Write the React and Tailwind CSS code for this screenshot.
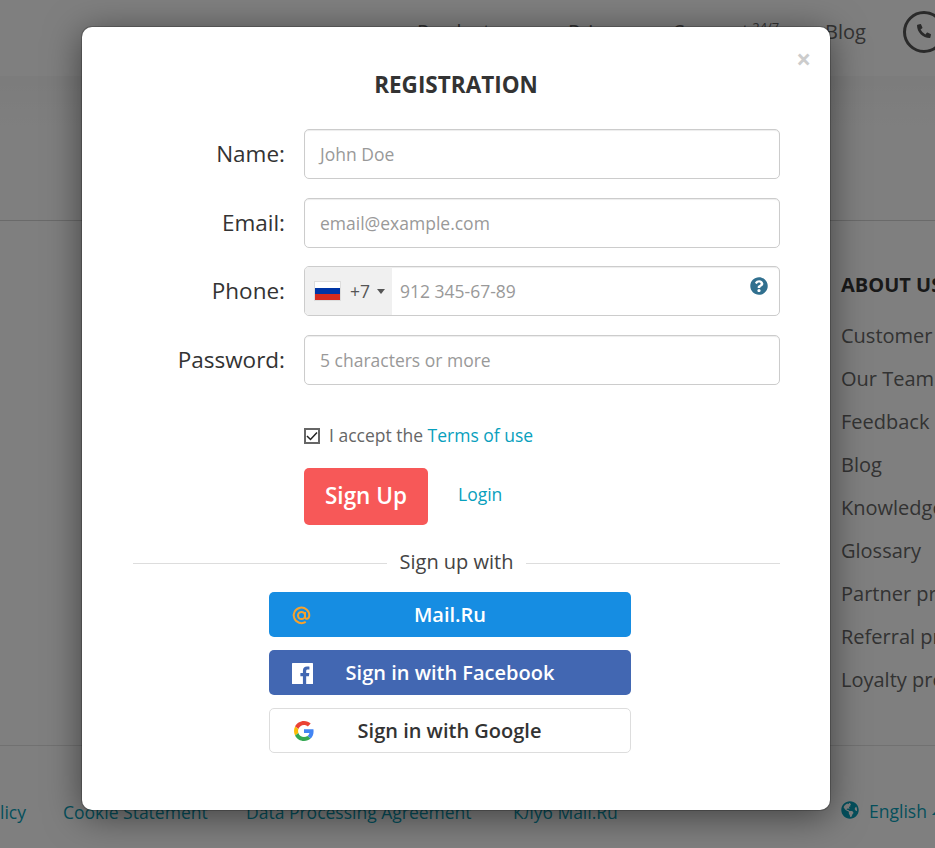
import React from "react";
import { FaGlobeAmericas, FaPhoneAlt, FaQuestionCircle } from "react-icons/fa";

const aboutLinks = [
  "Customer Reviews",
  "Our Team",
  "Feedback",
  "Blog",
  "Knowledge Base",
  "Glossary",
  "Partner program",
  "Referral program",
  "Loyalty program",
];

function Header() {
  return (
    <header className="flex h-[76px] items-start bg-white pl-[417px] text-[20px] text-[#666]">
      <nav className="flex pt-[18px] leading-[28px]">
        <span className="w-[151px] shrink-0">Products</span>
        <span className="w-[106px] shrink-0">Prices</span>
        <span className="w-[151px] shrink-0">
          Support <sup className="relative -top-[7px] ml-[-2px] text-[13px] leading-none">24/7</sup>
        </span>
        <span className="w-[78px] shrink-0">Blog</span>
      </nav>
      <span className="mt-[11px] flex size-[42px] shrink-0 items-center justify-center rounded-full border-[3px] border-[#555] text-[#555]">
        <FaPhoneAlt className="mb-[2px] size-[14px]" />
      </span>
    </header>
  );
}

function Page() {
  return (
    <div className="h-[848px] w-[935px] overflow-hidden whitespace-nowrap bg-white">
      <Header />
      <div className="h-[145px] border-b border-[#d5d5d5] bg-linear-to-b from-[#f8f8f8] to-white to-40%" />
      <section className="h-[525px] border-b border-[#e2e2e2] pl-[841px] pt-[50px]">
        <h3 className="text-[20px] font-bold leading-[28px] text-[#333]">ABOUT US</h3>
        <ul className="mt-[15px] text-[20px] leading-[43px] text-[#666]">
          {aboutLinks.map((label) => (
            <li key={label}>{label}</li>
          ))}
        </ul>
      </section>
      <footer className="flex pt-[52px] text-[17.5px] leading-[28px] text-[#0a9fb8]">
        <span className="flex w-[26px] shrink-0 justify-end">Privacy Policy</span>
        <span className="ml-[37px] w-[183px] shrink-0">Cookie Statement</span>
        <span className="w-[267px] shrink-0">Data Processing Agreement</span>
        <span className="w-[328px] shrink-0">Клуб Mail.Ru</span>
        <FaGlobeAmericas className="mt-[3px] size-[18px] shrink-0" />
        <span className="-mt-px ml-[10px]">English</span>
        <i className="ml-[5px] mt-[12px] size-0 border-x-[5px] border-b-[5px] border-x-transparent border-b-[#0a9fb8]" />
      </footer>
    </div>
  );
}

function Field({ label, children }) {
  return (
    <div className="flex h-[50px]">
      <label className="w-[203px] text-right text-[22.5px] leading-[49px] text-[#333]">{label}</label>
      <div className="ml-[19px] flex w-[476px] items-center overflow-hidden rounded-[5px] border border-[#ccc] bg-white text-[17.5px] text-[#999] shadow-[inset_0_1px_1px_rgba(0,0,0,0.075)]">
        {children}
      </div>
    </div>
  );
}

function PlainInput({ placeholder }) {
  return <span className="pl-[15px]">{placeholder}</span>;
}

function PhoneInput() {
  return (
    <>
      <div className="flex h-full w-[87px] shrink-0 items-center bg-[#f0f0f0] text-[#555]">
        <span className="ml-[9px] flex h-[20px] w-[27px] shrink-0 flex-col border border-[#ddd]">
          <i className="flex-1 bg-white" />
          <i className="flex-1 bg-[#0035a5]" />
          <i className="flex-1 bg-[#d52b1e]" />
        </span>
        <span className="ml-[9px] w-[20px] shrink-0">+7</span>
        <i className="ml-[7px] size-0 shrink-0 border-x-[4px] border-t-[5px] border-x-transparent border-t-[#555]" />
      </div>
      <span className="ml-[8px] grow">912 345-67-89</span>
      <FaQuestionCircle className="mb-[10px] mr-[11px] size-[18px] text-[#31708f]" />
    </>
  );
}

function MailIcon() {
  return (
    <svg viewBox="0 0 24 24" className="ml-[24px] mt-px size-[17px] overflow-visible" fill="none" stroke="#f6a22d" strokeWidth="2.8">
      <circle cx="12" cy="12" r="5" />
      <path d="M17 7v7c0 4 6 3.500 6-2A11 11 0 1 0 18 21" />
    </svg>
  );
}

function FacebookIcon() {
  return (
    <svg viewBox="0 0 20 20" className="ml-[23px] mt-[2px] size-[21px]">
      <rect width="20" height="20" rx="0.5" fill="#fff" />
      <path
        d="M13.500 20v-7.500h2.600l.4-3h-3V7.700c0-.9.3-1.500 1.500-1.500h1.600V3.500c-.3 0-1.200-.1-2.300-.1-2.300 0-3.900 1.400-3.900 3.900v2.200H8v3h2.400V20z"
        fill="#4267b2"
      />
    </svg>
  );
}

function GoogleIcon() {
  return (
    <svg viewBox="0 0 48 48" className="ml-[24px] mt-px size-[20px]">
      <path fill="#EA4335" d="M24 9.500c3.540 0 6.710 1.220 9.210 3.600l6.850-6.850C35.900 2.380 30.470 0 24 0 14.620 0 6.510 5.380 2.560 13.220l7.980 6.190C12.430 13.720 17.740 9.500 24 9.500z" />
      <path fill="#4285F4" d="M46.980 24.550c0-1.570-.15-3.090-.38-4.550H24v9.020h12.940c-.58 2.960-2.260 5.480-4.780 7.180l7.730 6c4.510-4.180 7.090-10.360 7.090-17.650z" />
      <path fill="#FBBC05" d="M10.530 28.590c-.48-1.450-.76-2.990-.76-4.590s.27-3.140.76-4.590l-7.980-6.190C.92 16.460 0 20.120 0 24c0 3.880.92 7.540 2.560 10.780l7.970-6.190z" />
      <path fill="#34A853" d="M24 48c6.480 0 11.930-2.130 15.890-5.810l-7.730-6c-2.150 1.450-4.920 2.300-8.160 2.300-6.260 0-11.570-4.220-13.470-9.910l-7.980 6.190C6.510 42.620 14.620 48 24 48z" />
    </svg>
  );
}

function SocialButton({ icon, className, children }) {
  return (
    <button className={`grid h-[45px] w-[362px] items-center rounded-[5px] text-[20px] font-semibold ${className}`}>
      {icon}
      <span className="pt-px text-center">{children}</span>
    </button>
  );
}

function RegistrationDialog() {
  return (
    <div
      role="dialog"
      className="absolute left-[82px] top-[27px] h-[783px] w-[748px] whitespace-nowrap rounded-[10px] bg-white shadow-[0_0_0_1px_rgba(0,0,0,0.2),0_6px_36px_rgba(0,0,0,0.5)]"
    >
      <button className="absolute right-[19px] top-[18px] text-[26px] font-bold leading-[28px] text-[#ccc]">×</button>
      <h2 className="pt-[42px] text-center text-[22.5px] font-bold leading-[32px] text-[#333]">REGISTRATION</h2>
      <form className="mt-[28px] flex flex-col gap-[18.7px]">
        <Field label="Name:"><PlainInput placeholder="John Doe" /></Field>
        <Field label="Email:"><PlainInput placeholder="email@example.com" /></Field>
        <Field label="Phone:"><PhoneInput /></Field>
        <Field label="Password:"><PlainInput placeholder="5 characters or more" /></Field>
      </form>
      <div className="ml-[222px] mt-[36px] flex h-[28px] items-center text-[17.5px] text-[#666]">
        <span className="mr-[9px] mt-[2px] flex size-[16px] items-center justify-center border-2 border-[#666]">
          <svg viewBox="0 0 12 12" className="size-[12px] shrink-0" fill="none" stroke="#222" strokeWidth="1.5">
            <path d="M1 6l3.500 3.500L11 2.500" />
          </svg>
        </span>
        <span>I accept the <a className="text-[#08a0bd]">Terms of use</a></span>
      </div>
      <div className="ml-[222px] mt-[19px] flex items-center">
        <button className="h-[57px] w-[124px] rounded-[5px] bg-[#f75858] pb-px text-[22.5px] font-semibold text-white">Sign Up</button>
        <a className="mb-[4px] ml-[30px] text-[17.5px] text-[#08a0bd]">Login</a>
      </div>
      <div className="ml-[51px] mt-[23px] flex h-[28px] w-[647px] items-center text-[20px] text-[#444]">
        <i className="mt-[3px] h-px w-[254px] bg-[#ddd]" />
        <span className="grow text-center">Sign up with</span>
        <i className="mt-[3px] h-px w-[254px] bg-[#ddd]" />
      </div>
      <div className="ml-[187px] mt-[16px] flex flex-col gap-[13px]">
        <SocialButton icon={<MailIcon />} className="grid-cols-[56px_250px_56px] bg-[#168de2] text-white">Mail.Ru</SocialButton>
        <SocialButton icon={<FacebookIcon />} className="grid-cols-[56px_250px_56px] bg-[#4267b2] text-white">Sign in with Facebook</SocialButton>
        <SocialButton icon={<GoogleIcon />} className="grid-cols-[55px_249px_56px] border border-[#ddd] bg-white text-[#333]">Sign in with Google</SocialButton>
      </div>
    </div>
  );
}

export default function App() {
  return (
    <main className="relative h-[848px] w-[935px] overflow-hidden font-['Open_Sans',sans-serif]">
      <Page />
      <div className="absolute inset-0 bg-black/50" />
      <RegistrationDialog />
    </main>
  );
}
